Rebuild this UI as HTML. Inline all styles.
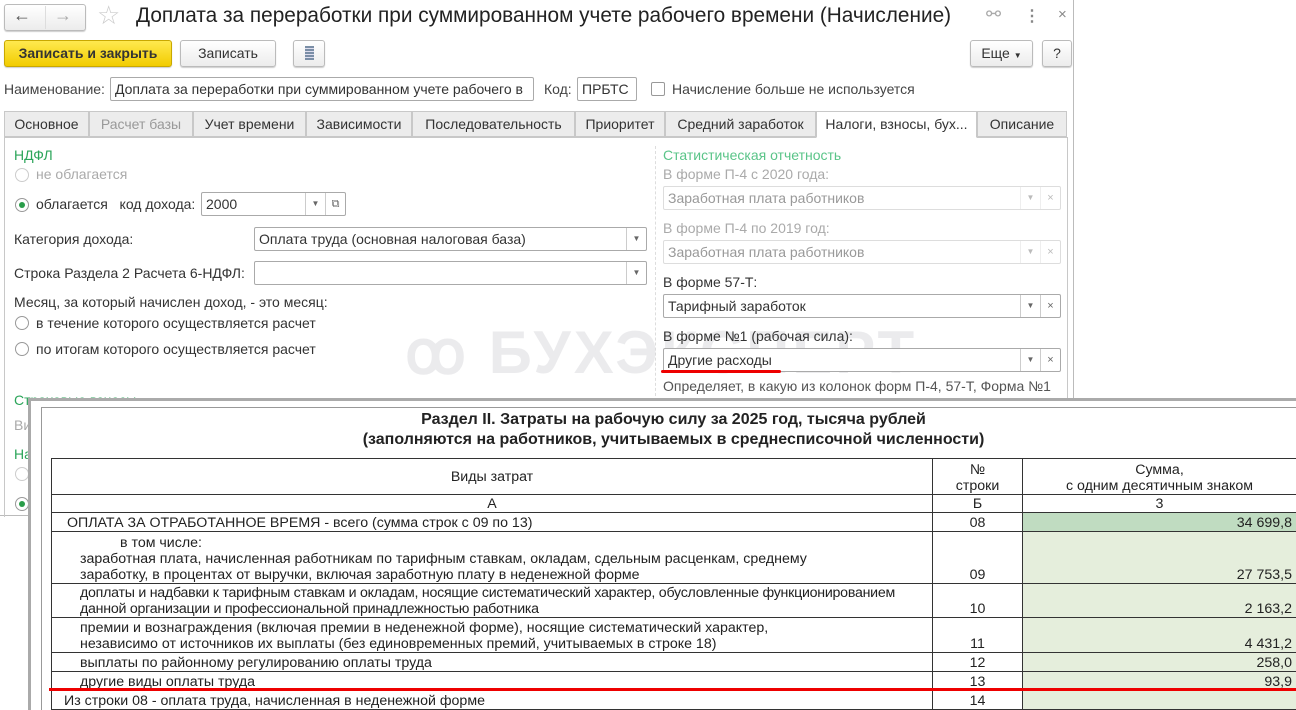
<!DOCTYPE html>
<html><head><meta charset="utf-8"><style>
*{box-sizing:border-box;margin:0;padding:0}
body{width:1296px;height:710px;overflow:hidden;background:#fff;font-family:"Liberation Sans",Arial,sans-serif;font-size:14px;color:#333;position:relative}
.a{position:absolute;white-space:nowrap}
.btn{position:absolute;border:1px solid #bbb;border-radius:3px;background:linear-gradient(#fff,#ececec);box-shadow:0 1px 1px rgba(0,0,0,.2);text-align:center;line-height:24px;font-size:14px;color:#333}
.inp{position:absolute;border:1px solid #aaa;border-radius:2px;background:#fff;height:24px;line-height:22px;padding-left:4px;font-size:14px;color:#333}
.dd{position:absolute;top:0;bottom:0;border-left:1px solid #ccc;width:20px;text-align:center;font-size:8px;color:#666}
.tab{position:absolute;top:111px;height:26px;border:1px solid #c8c8c8;background:#ececec;line-height:24px;text-align:center;font-size:14px;color:#333}
.g{color:#2ca55a}
.gr{color:#999}
.rad{position:absolute;width:14px;height:14px;border:1px solid #999;border-radius:50%;background:#fff}
.rad.on::after{content:"";position:absolute;left:3px;top:3px;width:6px;height:6px;border-radius:50%;background:#2a9d4a}
table{border-collapse:collapse;position:absolute;left:51px;top:458px;width:1245px;table-layout:fixed;font-size:14.2px;color:#222}
td{border:1px solid #333;padding:0 4px;vertical-align:bottom;line-height:16px;white-space:nowrap;overflow:hidden}
.c{text-align:center}.r{text-align:right}
.gg{background:#e5eedc}.gd{background:#c0dcc1}
</style></head><body>
<div class="a" style="left:1073px;top:0;width:1px;height:400px;background:#bbb"></div>
<div class="a" style="left:0;top:515px;width:30px;height:1px;background:#bbb"></div>
<div class="btn" style="left:4px;top:4px;width:82px;height:27px;border-radius:3px"></div>
<div class="a" style="left:45px;top:6px;width:1px;height:23px;background:#ddd"></div>
<div class="a" style="left:13px;top:5px;font-size:18px;color:#555">←</div>
<div class="a" style="left:54px;top:5px;font-size:18px;color:#aaa">→</div>
<div class="a" style="left:97px;top:0px;font-size:26px;color:#ccc">☆</div>
<div class="a" style="left:136px;top:4px;font-size:20.8px;color:#222">Доплата за переработки при суммированном учете рабочего времени (Начисление)</div>
<div class="a" style="left:986px;top:4px;font-size:18px;color:#aaa">⚯</div>
<div class="a" style="left:1024px;top:6px;font-size:16px;color:#888;font-weight:bold">⋮</div>
<div class="a" style="left:1058px;top:6px;font-size:15px;color:#888">×</div>

<div class="btn" style="left:4px;top:40px;width:168px;height:27px;background:linear-gradient(#ffe94f,#f2cc00);border-color:#c9a800;font-weight:bold;color:#333">Записать и закрыть</div>
<div class="btn" style="left:180px;top:40px;width:96px;height:27px">Записать</div>
<div class="btn" style="left:293px;top:40px;width:32px;height:27px"><span style="display:inline-block;width:9px;height:14px;margin-top:5px;background:repeating-linear-gradient(#7a8ea6 0 2px,#dde 2px 3px)"></span></div>
<div class="btn" style="left:970px;top:40px;width:63px;height:27px">Еще <span style="font-size:8px">▼</span></div>
<div class="btn" style="left:1042px;top:40px;width:30px;height:27px">?</div>

<div class="a" style="left:4px;top:81px;color:#444">Наименование:</div>
<div class="inp" style="left:110px;top:77px;width:424px;overflow:hidden">Доплата за переработки при суммированном учете рабочего в</div>
<div class="a" style="left:544px;top:81px;color:#444">Код:</div>
<div class="inp" style="left:577px;top:77px;width:60px">ПРБТС</div>
<div class="a" style="left:651px;top:82px;width:14px;height:14px;border:1px solid #999;border-radius:2px"></div>
<div class="a" style="left:672px;top:81px;color:#444">Начисление больше не используется</div>

<div class="tab" style="left:4px;width:85px">Основное</div>
<div class="tab" style="left:89px;width:104px;color:#999">Расчет базы</div>
<div class="tab" style="left:193px;width:113px">Учет времени</div>
<div class="tab" style="left:306px;width:106px">Зависимости</div>
<div class="tab" style="left:412px;width:163px">Последовательность</div>
<div class="tab" style="left:575px;width:90px">Приоритет</div>
<div class="tab" style="left:665px;width:151px">Средний заработок</div>
<div class="tab" style="left:816px;width:161px;background:#fff;border-bottom-color:#fff;height:27px">Налоги, взносы, бух...</div>
<div class="tab" style="left:977px;width:90px">Описание</div>
<div class="a" style="left:4px;top:137px;width:1px;height:380px;background:#c8c8c8"></div>
<div class="a" style="left:1067px;top:137px;width:1px;height:265px;background:#c8c8c8"></div>
<div class="a" style="left:4px;top:137px;width:812px;height:1px;background:#c8c8c8"></div>
<div class="a" style="left:977px;top:137px;width:90px;height:1px;background:#c8c8c8"></div>
<div class="a" style="left:655px;top:146px;width:0;height:255px;border-left:1px dashed #ddd"></div>

<div class="a g" style="left:14px;top:147px">НДФЛ</div>
<div class="rad" style="left:15px;top:168px;border-color:#ccc"></div>
<div class="a gr" style="left:36px;top:166px;color:#aaa">не облагается</div>
<div class="rad on" style="left:15px;top:198px"></div>
<div class="a" style="left:36px;top:196px">облагается&nbsp;&nbsp; код дохода:</div>
<div class="inp" style="left:201px;top:192px;width:145px">2000<div class="dd" style="right:20px">▼</div><div class="dd" style="right:0;font-size:11px">⧉</div></div>
<div class="a" style="left:14px;top:231px">Категория дохода:</div>
<div class="inp" style="left:254px;top:227px;width:393px">Оплата труда (основная налоговая база)<div class="dd" style="right:0">▼</div></div>
<div class="a" style="left:14px;top:265px">Строка Раздела 2 Расчета 6-НДФЛ:</div>
<div class="inp" style="left:254px;top:261px;width:393px"><div class="dd" style="right:0">▼</div></div>
<div class="a" style="left:14px;top:294px">Месяц, за который начислен доход, - это месяц:</div>
<div class="rad" style="left:15px;top:316px"></div>
<div class="a" style="left:36px;top:315px">в течение которого осуществляется расчет</div>
<div class="rad" style="left:15px;top:342px"></div>
<div class="a" style="left:36px;top:341px">по итогам которого осуществляется расчет</div>
<div class="a g" style="left:14px;top:392px">Страховые взносы</div>
<div class="a" style="left:14px;top:417px;color:#aaa">Ви</div>
<div class="a g" style="left:14px;top:446px">На</div>
<div class="rad" style="left:15px;top:467px;border-color:#ccc"></div>
<div class="rad on" style="left:15px;top:497px"></div>

<div class="a" style="left:405px;top:318px;font-size:60px;font-weight:bold;color:rgba(205,205,210,.4);letter-spacing:3px">ꝏ БУХЭКСПЕРТ</div>

<div class="a g" style="left:663px;top:147px;color:#5ac488">Статистическая отчетность</div>
<div class="a" style="left:663px;top:166px;color:#aaa">В форме П-4 с 2020 года:</div>
<div class="inp" style="left:663px;top:186px;width:398px;border-color:#ddd;color:#999">Заработная плата работников<div class="dd" style="right:20px;color:#bbb;border-color:#eee">▼</div><div class="dd" style="right:0;font-size:11px;color:#bbb;border-color:#eee">×</div></div>
<div class="a" style="left:663px;top:220px;color:#aaa">В форме П-4 по 2019 год:</div>
<div class="inp" style="left:663px;top:240px;width:398px;border-color:#ddd;color:#999">Заработная плата работников<div class="dd" style="right:20px;color:#bbb;border-color:#eee">▼</div><div class="dd" style="right:0;font-size:11px;color:#bbb;border-color:#eee">×</div></div>
<div class="a" style="left:663px;top:274px">В форме 57-Т:</div>
<div class="inp" style="left:663px;top:294px;width:398px">Тарифный заработок<div class="dd" style="right:20px">▼</div><div class="dd" style="right:0;font-size:11px">×</div></div>
<div class="a" style="left:663px;top:328px">В форме №1 (рабочая сила):</div>
<div class="inp" style="left:663px;top:348px;width:398px">Другие расходы<div class="dd" style="right:20px">▼</div><div class="dd" style="right:0;font-size:11px">×</div></div>
<div class="a" style="left:661px;top:370px;width:120px;height:3px;background:#e00;border-radius:2px"></div>
<div class="a" style="left:663px;top:378px;color:#555">Определяет, в какую из колонок форм П-4, 57-Т, Форма №1</div>

<div class="a" style="left:28px;top:398px;width:1268px;height:312px;background:#fff;border-top:3px solid #aaa;border-left:3px solid #aaa"></div>
<div class="a" style="left:41px;top:407px;width:1255px;height:303px;border-top:1px solid #999;border-left:1px solid #999"></div>
<div class="a" style="left:51px;top:410px;width:1245px;text-align:center;font-weight:bold;font-size:16px;line-height:20px;color:#222">Раздел II. Затраты на рабочую силу за 2025 год, тысяча рублей<br>(заполняются на работников, учитываемых в среднесписочной численности)</div>
<table>
<colgroup><col style="width:881px"><col style="width:90px"><col style="width:274px"></colgroup>
<tr style="height:36px"><td class="c" style="vertical-align:middle">Виды затрат</td><td class="c">№<br>строки</td><td class="c">Сумма,<br>с одним десятичным знаком</td></tr>
<tr style="height:18px"><td class="c">А</td><td class="c">Б</td><td class="c">3</td></tr>
<tr style="height:19px"><td style="padding-left:15px">ОПЛАТА ЗА ОТРАБОТАННОЕ ВРЕМЯ - всего (сумма строк с 09 по 13)</td><td class="c">08</td><td class="r gd">34 699,8</td></tr>
<tr style="height:52px"><td style="padding-left:28px"><span style="padding-left:40px">в том числе:</span><br>заработная плата, начисленная работникам по тарифным ставкам, окладам, сдельным расценкам, среднему<br>заработку, в процентах от выручки, включая заработную плату в неденежной форме</td><td class="c">09</td><td class="r gg">27 753,5</td></tr>
<tr style="height:34px"><td style="padding-left:28px;letter-spacing:-0.25px">доплаты и надбавки к тарифным ставкам и окладам, носящие систематический характер, обусловленные функционированием<br>данной организации и профессиональной принадлежностью работника</td><td class="c">10</td><td class="r gg">2 163,2</td></tr>
<tr style="height:35px"><td style="padding-left:28px">премии и вознаграждения (включая премии в неденежной форме), носящие систематический характер,<br>независимо от источников их выплаты (без единовременных премий, учитываемых в строке 18)</td><td class="c">11</td><td class="r gg">4 431,2</td></tr>
<tr style="height:19px"><td style="padding-left:28px">выплаты по районному регулированию оплаты труда</td><td class="c">12</td><td class="r gg">258,0</td></tr>
<tr style="height:19px"><td style="padding-left:28px">другие виды оплаты труда</td><td class="c">13</td><td class="r gg">93,9</td></tr>
<tr style="height:19px"><td style="padding-left:12px">Из строки 08 - оплата труда, начисленная в неденежной форме</td><td class="c">14</td><td class="gg"></td></tr>
</table>
<div class="a" style="left:49px;top:688px;width:1247px;height:3px;background:#e00"></div>
</body></html>
